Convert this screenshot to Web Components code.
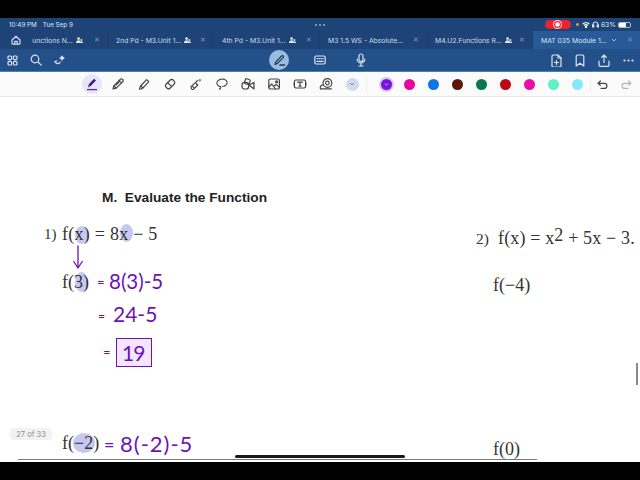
<!DOCTYPE html>
<html>
<head>
<style>
  html, body { margin: 0; padding: 0; background: #000; }
  body { width: 640px; height: 480px; overflow: hidden; font-family: "Inter", "Liberation Sans", sans-serif; }
</style>
</head>
<body>
<note-app>
  <status-bar slot="status"></status-bar>
  <tab-strip slot="tabs">
    <tab-item width="76" shared first><span style="margin-left:-3.5px">Functions N...</span></tab-item>
    <tab-item width="106" shared>2nd Pd - M3.Unit 1...</tab-item>
    <tab-item width="106" shared>4th Pd - M3.Unit 1...</tab-item>
    <tab-item width="107">M3 1.5 WS - Absolute...</tab-item>
    <tab-item width="106" shared>M4.U2.Functions R...</tab-item>
    <tab-item width="107" active>MAT 035 Module 1...</tab-item>
  </tab-strip>
  <main-toolbar slot="toolbar"></main-toolbar>
  <ink-toolbar slot="ink"></ink-toolbar>
  <doc-page slot="page"></doc-page>
</note-app>

<script>
  const svgIcon = (w, h, inner, extra = '') =>
    `<svg width="${w}" height="${h}" viewBox="0 0 ${w} ${h}" fill="none" stroke="currentColor" stroke-width="1.2" stroke-linecap="round" stroke-linejoin="round" ${extra}>${inner}</svg>`

  customElements.define('note-app', class extends HTMLElement {
    connectedCallback() {
      this.attachShadow({ mode: 'open' }).innerHTML = `
        <style>
          :host { display: flex; flex-direction: column; width: 640px; height: 480px; background: #000; }
          .top { height: 18px; background: #000; flex: none; }
          .bottom { height: 18px; background: #000; flex: none; }
          ::slotted([slot=page]) { flex: 1; }
        </style>
        <div class="top"></div>
        <slot name="status"></slot>
        <slot name="tabs"></slot>
        <slot name="toolbar"></slot>
        <slot name="ink"></slot>
        <slot name="page"></slot>
        <div class="bottom"></div>`
    }
  })

  customElements.define('status-bar', class extends HTMLElement {
    connectedCallback() {
      this.attachShadow({ mode: 'open' }).innerHTML = `
        <style>
          :host { display: grid; grid-template-columns: 1fr auto 1fr; align-items: center; height: 13px; padding: 0 9px 0 9px; background: #1e4477; color: #dfe8f3; font: 6.3px "Inter", sans-serif; }
          .right { display: flex; justify-content: flex-end; align-items: center; gap: 2px; }
          .left { display: flex; gap: 6px; }
          .dots { display: flex; gap: 2px; }
          .dots i { width: 2px; height: 2px; border-radius: 50%; background: #9fb3cc; }
          .rec { width: 26px; height: 9px; border-radius: 5px; background: #e8252f; display: flex; align-items: center; justify-content: center; margin-right: 3px; }
          .rec i { width: 5px; height: 5px; border-radius: 50%; border: 1px solid #fbd5d5; box-sizing: border-box; background: #fff; box-shadow: 0 0 0 1px #e8252f, 0 0 0 2px #fbd5d5; }
          .cam { width: 3px; height: 3px; border-radius: 50%; background: #e79a3a; margin-right: 1px; }
          .pct { font-size: 6.8px; }
          .batt { width: 13px; height: 6px; border-radius: 2px; border: 1px solid #a9bbd2; box-sizing: border-box; overflow: hidden; }
          .batt i { display: block; width: 63%; height: 100%; background: #fff; }
        </style>
        <div class="left"><span>10:49 PM</span><span>Tue Sep 9</span></div>
        <div class="dots"><i></i><i></i><i></i></div>
        <div class="right">
          <div class="rec"><i></i></div>
          <div class="cam"></div>
          <svg width="8" height="6" viewBox="0 0 8 6" fill="none" stroke="#fff" stroke-width="1.1"><path d="M.6 2.2a5 5 0 0 1 6.8 0M2 3.5a3 3 0 0 1 4 0"/><circle cx="4" cy="5" r=".6" fill="#fff"/></svg>
          <svg width="7" height="7" viewBox="0 0 7 7" fill="none" stroke="#e6edf6" stroke-width="1"><path d="M1 5V3.5a2.5 2.5 0 0 1 5 0V5"/><rect x=".6" y="4" width="1.2" height="2" fill="#e6edf6"/><rect x="5.2" y="4" width="1.2" height="2" fill="#e6edf6"/></svg>
          <span class="pct">63%</span>
          <div class="batt"><i></i></div>
        </div>`
    }
  })

  customElements.define('tab-strip', class extends HTMLElement {
    connectedCallback() {
      this.attachShadow({ mode: 'open' }).innerHTML = `
        <style>
          :host { display: flex; height: 18px; background: #1e4477; color: #d3deeb; }
          .home { width: 32px; flex: none; display: flex; align-items: center; justify-content: center; }
        </style>
        <div class="home">${svgIcon(10, 10, '<path d="M1 5 5 1.2 9 5v3.4a.8.8 0 0 1-.8.8H1.8a.8.8 0 0 1-.8-.8z"/><path d="M3.7 9.2V6.4h2.6v2.8"/>')}</div>
        <slot></slot>`
    }
  })

  customElements.define('tab-item', class extends HTMLElement {
    connectedCallback() {
      const active = this.hasAttribute('active')
      const shared = this.hasAttribute('shared')
      const first = this.hasAttribute('first')
      this.attachShadow({ mode: 'open' }).innerHTML = `
        <style>
          :host { display: flex; align-items: center; box-sizing: border-box; width: ${this.getAttribute('width')}px; flex: none; padding: 0 7px 0 ${first ? 0 : 8}px; font: 6.8px "Inter", sans-serif; white-space: nowrap; background: ${active ? '#275a97' : 'transparent'}; color: ${active ? '#dce6f2' : '#cfdbea'}; border-right: ${active ? 0 : 1}px solid #1b3d6c; }
          .label { flex: 1; overflow: hidden; }
          .tag { display: inline-block; width: 7px; height: 6px; margin-left: 3px; vertical-align: -0.5px; }
          .x { font-size: 6.5px; color: #7f97b8; }
          .chev { margin-right: 10px; color: #a8bdd7; }
        </style>
        <span class="label"><slot></slot>${shared ? `<svg class="tag" viewBox="0 0 7 6" fill="#dfe7f1"><circle cx="2.6" cy="1.6" r="1.4"/><path d="M0 6c0-2 1-2.8 2.6-2.8S5 4 5 6z"/><circle cx="5.4" cy="3" r="1"/><path d="M4.4 6h2.6c0-1-.4-1.8-1.4-1.8z"/></svg>` : ''}</span>
        ${active ? `<svg class="chev" width="6" height="4" viewBox="0 0 6 4" fill="none" stroke="currentColor" stroke-width="1"><path d="M1 1l2 2 2-2"/></svg>` : ''}
        <span class="x">✕</span>`
    }
  })

  customElements.define('main-toolbar', class extends HTMLElement {
    connectedCallback() {
      const slot = inner => `<span class="slot">${inner}</span>`
      this.attachShadow({ mode: 'open' }).innerHTML = `
        <style>
          :host { display: grid; grid-template-columns: 1fr auto 1fr; align-items: center; height: 23px; background: #245089; color: #dbe5f1; border-bottom: 1px solid #4a7fb8; box-sizing: border-box; }
          div { display: flex; align-items: center; }
          .slot { width: 24px; display: flex; justify-content: center; align-items: center; }
          .mid { gap: 17px; }
          .right { justify-content: flex-end; }
          .pen { width: 20px; height: 20px; border-radius: 50%; background: #9bbcdc; justify-content: center; color: #1c3555; }
        </style>
        <div class="left">
          ${slot(svgIcon(11, 11, '<rect x="1" y="1" width="3.6" height="3.6" rx="1"/><rect x="6.4" y="1" width="3.6" height="3.6" rx="1"/><rect x="1" y="6.4" width="3.6" height="3.6" rx="1"/><rect x="6.4" y="6.4" width="3.6" height="3.6" rx="1"/>'))}
          ${slot(svgIcon(12, 12, '<circle cx="5" cy="5" r="3.8"/><path d="M8 8l3.2 3.2"/>'))}
          ${slot(svgIcon(12, 12, '<path d="M1 7.5c1 2.4 4 3 5.2.6"/><path d="M1 7.5l1.8-.5M8 2l.6 1.4 1.4.6-1.4.6L8 6l-.6-1.4L6 4l1.4-.6z" fill="currentColor"/>'))}
        </div>
        <div class="mid">
          ${slot(`<div class="pen">${svgIcon(13, 13, '<path d="M2 10.5 2.8 7.8 8.6 2a1.1 1.1 0 0 1 1.6 1.6L4.4 9.4z"/><path d="M7 11h4.5" stroke-width="1.6"/>')}</div>`)}
          ${slot(svgIcon(12, 10, '<rect x=".8" y="1" width="10.4" height="8" rx="1.4"/><path d="M3 3.6h.6M5 3.6h.6M7 3.6h.6M9 3.6h.3M3 6.4h6"/>'))}
          ${slot(svgIcon(10, 14, '<rect x="3" y="1" width="4" height="7.6" rx="2"/><path d="M1.2 6.2a3.8 3.8 0 0 0 7.6 0M5 10v2.6M3 13h4"/>'))}
        </div>
        <div class="right">
          ${slot(svgIcon(11, 13, '<path d="M1 2.2A1.2 1.2 0 0 1 2.2 1H7l3 3v7.8A1.2 1.2 0 0 1 8.8 13H2.2A1.2 1.2 0 0 1 1 11.8z"/><path d="M7 1v3h3M5.5 6.5v4M3.5 8.5h4"/>'))}
          ${slot(svgIcon(10, 13, '<path d="M1.2 2.2A1.2 1.2 0 0 1 2.4 1h5.2a1.2 1.2 0 0 1 1.2 1.2V12L5 9.2 1.2 12z"/>'))}
          ${slot(svgIcon(12, 13, '<path d="M6 8.4V1.2M3.6 3.4 6 1l2.4 2.4M1 7v4a1.4 1.4 0 0 0 1.4 1.4h7.2A1.4 1.4 0 0 0 11 11V7"/>'))}
          ${slot('<svg width="11" height="3" viewBox="0 0 11 3" fill="currentColor"><circle cx="1.5" cy="1.5" r="1.1"/><circle cx="5.5" cy="1.5" r="1.1"/><circle cx="9.5" cy="1.5" r="1.1"/></svg>')}
        </div>`
    }
  })

  customElements.define('color-dot', class extends HTMLElement {
    connectedCallback() {
      const c = this.getAttribute('color')
      const sel = this.hasAttribute('selected')
      this.attachShadow({ mode: 'open' }).innerHTML = `
        <style>
          :host { display: block; width: 11px; height: 11px; border-radius: 50%; background: ${c}; ${sel ? 'box-shadow: 0 0 0 2px #d9c6f3;' : ''} position: relative; }
          svg { position: absolute; left: 3px; top: 4px; }
        </style>
        ${sel ? '<svg width="5" height="3" viewBox="0 0 5 3" fill="none" stroke="#e4d2fb" stroke-width=".8"><path d="M.8.6 2.5 2.2 4.2.6"/></svg>' : ''}`
    }
  })

  customElements.define('ink-toolbar', class extends HTMLElement {
    connectedCallback() {
      const tool = inner => `<span class="tool">${svgIcon(14, 14, inner)}</span>`
      this.attachShadow({ mode: 'open' }).innerHTML = `
        <style>
          :host { display: flex; align-items: center; height: 25px; padding-left: 79px; background: #fbfbfb; color: #444; border-bottom: 1px solid #e8e8e8; box-sizing: border-box; }
          .tool { width: 26px; flex: none; display: flex; justify-content: center; align-items: center; height: 20px; }
          .active { width: 20px; height: 20px; margin: 0 3px; border-radius: 50%; background: #e3e7f7; display: flex; justify-content: center; align-items: center; flex: none; }
          .caret { width: 13px; height: 13px; border-radius: 50%; background: #cfdcec; display: flex; align-items: center; justify-content: center; margin-left: 6.5px; flex: none; color: #6c8fb5; }
          .sep { width: 1px; height: 17px; background: #eeeeee; margin: 0 14px 0 7px; flex: none; }
          .colors { display: flex; gap: 12.9px; flex: none; }
          .undo { display: flex; gap: 13px; margin-left: 7px; padding-left: 6px; border-left: 1px solid #eeeeee; height: 17px; align-items: center; }
        </style>
        <span class="active">
          <svg width="14" height="14" viewBox="0 0 14 14" fill="none"><path d="M3 10.5l1-3.5 5-5.2 2 1.8-5 5.2z" fill="#4a1a86"/><path d="M2 12.6h10" stroke="#6a1bd0" stroke-width="1.3"/></svg>
        </span>
        ${tool('<path d="M2 12l.8-3.2L9.4 2.2a1.2 1.2 0 0 1 1.8 0l.6.6a1.2 1.2 0 0 1 0 1.8L5.2 11.2z"/><path d="M8.2 3.4l2.4 2.4M3 9l2 2M5 8l4-4"/>')}
        ${tool('<path d="M2.4 12.2 3.6 9 9.6 2.6l2.2 2L6 10.8l-2.2 1.4"/><path d="M3.6 9 6 10.8"/>')}
        ${tool('<rect x="4.4" y="2" width="5.6" height="10" rx="2" transform="rotate(45 7 7)"/><path d="M5 6l3.4 3.4"/>')}
        ${tool('<path d="M2 9.6 6.4 5.6l2.4 2.4L4.6 12.2a1.4 1.4 0 0 1-2-.2z"/><path d="M7 5 8.4 3.6M3.6 9.4l1.4 1.4"/><circle cx="10.8" cy="3.2" r="1.3" fill="#8a8a8a" stroke="none"/>')}
        ${tool('<path d="M4.6 9.4C2.6 8.6 1.6 7 2 5.4 2.6 3.2 5.4 1.8 8.2 2.2c2.6.4 4.2 2 3.8 4-.4 1.8-2.2 3-4.4 3.2" stroke-dasharray="1.8 1.2"/><path d="M5.6 9.6c.4 1.4-.4 2.4-1.2 2.6"/>')}
        ${tool('<rect x="1" y="5.4" width="6.6" height="6.6" rx="2.6"/><rect x="4" y="2" width="5" height="5" rx="1" transform="rotate(20 6 4)"/><path d="M8 8l5-2.4v6.4z"/>')}
        ${tool('<rect x="1.8" y="2" width="10.6" height="10" rx="1.6"/><circle cx="9.6" cy="4.8" r="1"/><path d="M1.8 10l3-3 3.6 5M7 9l2-1.6 3.4 3"/>')}
        ${tool('<rect x="1.4" y="3" width="11.2" height="8" rx="1.4"/><path d="M4.6 5.2h4.8M7 5.2v4M6 9.2h2M0 7h1.4M12.6 7H14"/>')}
        ${tool('<circle cx="8.4" cy="6" r="4.4"/><circle cx="8.4" cy="6" r="1.8"/><path d="M1.4 11.8h11M4 7.8a3 3 0 0 0-2.6 4"/>')}
        <span class="caret"><svg width="6" height="4" viewBox="0 0 6 4" fill="none" stroke="currentColor" stroke-width="1"><path d="M1 1l2 2 2-2"/></svg></span>
        <span class="sep"></span>
        <div class="colors">
          <color-dot color="#7b10e0" selected></color-dot>
          <color-dot color="#e5089a"></color-dot>
          <color-dot color="#0f74e6"></color-dot>
          <color-dot color="#5c1508"></color-dot>
          <color-dot color="#077a4b"></color-dot>
          <color-dot color="#bb0a12"></color-dot>
          <color-dot color="#e80ea6"></color-dot>
          <color-dot color="#5cf2c8"></color-dot>
          <color-dot color="#86e9fb"></color-dot>
        </div>
        <div class="undo">
          ${svgIcon(11, 9, '<path d="M3.4 1 1 3.4l2.4 2M1 3.4h6.4a2.5 2.5 0 0 1 0 5H4"/>')}
          <span style="color:#b5b5b5;display:flex">${svgIcon(11, 9, '<path d="M7.6 1 10 3.4l-2.4 2M10 3.4H3.6a2.5 2.5 0 0 0 0 5H7"/>')}</span>
        </div>`
    }
  })

  // one line of the worksheet, placed on the page canvas by x/y attributes
  customElements.define('math-line', class extends HTMLElement {
    connectedCallback() {
      const x = this.getAttribute('x'), y = this.getAttribute('y')
      this.attachShadow({ mode: 'open' }).innerHTML = `
        <style>
          :host { position: absolute; left: ${x}px; top: ${y}px; white-space: nowrap; line-height: 1; font: ${this.getAttribute('size') || 18}px "Liberation Serif", serif; color: #333; letter-spacing: ${this.getAttribute('track') || 0}px; }
          :host([ink]) { font-family: "Lato", sans-serif; font-weight: 400; color: #6b12b8; }
          ::slotted(sup) { font-size: 18px; line-height: 0; vertical-align: 3px; }
        </style>
        <slot></slot>`
    }
  })

  // translucent highlighter blob behind a symbol
  customElements.define('ink-blob', class extends HTMLElement {
    connectedCallback() {
      this.attachShadow({ mode: 'open' }).innerHTML = `
        <style>
          :host { position: absolute; left: ${this.getAttribute('x')}px; top: ${this.getAttribute('y')}px; width: ${this.getAttribute('w') || 13}px; height: ${this.getAttribute('h') || 18}px; border-radius: 50%; background: #c6c8f2; }
        </style>`
    }
  })

  customElements.define('doc-page', class extends HTMLElement {
    connectedCallback() {
      // page origin is y=97 of the window; children sit on the free canvas
      this.attachShadow({ mode: 'open' }).innerHTML = `
        <style>
          :host { display: block; position: relative; background: #fff; overflow: hidden; }
          h1 { position: absolute; left: 102px; top: 93px; margin: 0; font: bold 13.7px "Liberation Sans", sans-serif; color: #222; white-space: nowrap; }
          .arrow { position: absolute; left: 72px; top: 148px; color: #6b12b8; }
          .box { position: absolute; left: 116px; top: 241px; width: 36px; height: 29px; box-sizing: border-box; border: 1.5px solid #6b12b8; background: #f3e6fc; }
          .badge { position: absolute; left: 10px; top: 331px; width: 42px; height: 12px; border-radius: 4px; background: #f2f2f2; color: #8b8b8b; font: 7.5px "Inter", sans-serif; display: flex; align-items: center; justify-content: center; }
          .rule { position: absolute; left: 18px; top: 362px; width: 519px; height: 1px; background: #777; }
          .handle { position: absolute; left: 235px; top: 358px; width: 170px; height: 3px; border-radius: 2px; background: #1a1a1a; }
          .thumb { position: absolute; left: 636px; top: 266px; width: 2px; height: 22px; background: #888; }
        </style>
        <h1>M.&nbsp; Evaluate the Function</h1>

        <ink-blob x="75" y="129"></ink-blob>
        <ink-blob x="120" y="127"></ink-blob>
        <math-line x="44" y="129" size="15">1)</math-line>
        <math-line x="62" y="127" track=".25">f(x) = 8x − 5</math-line>
        <svg class="arrow" width="12" height="24" viewBox="0 0 12 24" fill="none" stroke="currentColor" stroke-width="1.3" stroke-linecap="round" stroke-linejoin="round"><path d="M6 1v21.5M1.8 16.5 6 23l4.2-6.5"/></svg>

        <ink-blob x="75" y="175" h="20"></ink-blob>
        <math-line x="62" y="175">f(3)</math-line>
        <math-line x="97" y="177" ink size="13">=</math-line>
        <math-line x="109" y="172" ink size="20.5">8(3)-5</math-line>
        <math-line x="98" y="211" ink size="12">=</math-line>
        <math-line x="113" y="204" ink size="21">24-5</math-line>
        <math-line x="103" y="247" ink size="13">=</math-line>
        <div class="box"></div>
        <math-line x="122" y="243" ink size="21" track="-1">19</math-line>

        <ink-blob x="73" y="336" w="22" h="20"></ink-blob>
        <math-line x="62" y="336">f(−2)</math-line>
        <math-line x="104" y="336" ink size="18">=</math-line>
        <math-line x="120" y="333" ink size="22" track="1">8(-2)-5</math-line>

        <math-line x="476" y="133" size="15.5">2)</math-line>
        <math-line x="498" y="131" size="18" track=".15">f(x) = x<sup>2</sup> + 5x − 3.</math-line>
        <math-line x="493" y="178" size="18">f(−4)</math-line>
        <math-line x="493" y="342" size="18">f(0)</math-line>

        <div class="badge">27 of 33</div>
        <div class="rule"></div>
        <div class="handle"></div>
        <div class="thumb"></div>`
    }
  })
</script>
</body>
</html>
